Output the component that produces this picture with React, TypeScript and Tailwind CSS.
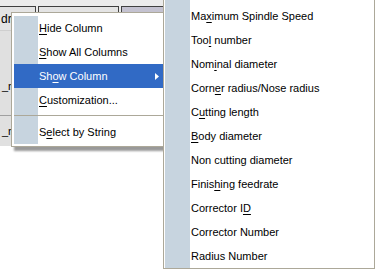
import { Fragment } from "react";

type Item = { label: string; key?: number; sub?: boolean; sep?: boolean };

const menuItems: Item[] = [
  { label: "Hide Column", key: 0 },
  { label: "Show All Columns", key: 0 },
  { label: "Show Column", key: 2, sub: true },
  { label: "Customization...", key: 0, sep: true },
  { label: "Select by String", key: 1 },
];

const columnItems: Item[] = [
  { label: "Maximum Spindle Speed", key: 2 },
  { label: "Tool number", key: 3 },
  { label: "Nominal diameter", key: 3 },
  { label: "Corner radius/Nose radius", key: 4 },
  { label: "Cutting length", key: 1 },
  { label: "Body diameter", key: 0 },
  { label: "Non cutting diameter" },
  { label: "Finishing feedrate", key: 5 },
  { label: "Corrector ID", key: 11 },
  { label: "Corrector Number" },
  { label: "Radius Number" },
];

// underline the access key letter
function Label({ text, k }: { text: string; k?: number }) {
  if (k === undefined) return <span>{text}</span>;
  return (
    <span>
      {text.slice(0, k)}
      <span className="underline underline-offset-2">{text[k]}</span>
      {text.slice(k + 1)}
    </span>
  );
}

export default function App() {
  return (
    <div
      className="relative w-[378px] h-[274px] overflow-hidden bg-white text-[11px] text-black"
      style={{ fontFamily: '"Liberation Sans", Arial, sans-serif' }}
    >
      {/* Grid behind the menus */}
      <div className="flex flex-col w-[165px] bg-[#ececec]">
        <div className="flex h-[30px] pt-[6px]">
          <div className="w-[36px] bg-[#e4e4e4] border-t border-r border-[#404040] pl-[1px] pt-[5px] text-[12px] leading-[14px]">
            dr
          </div>
          <div className="w-[2px]" />
          <div className="w-[81px] bg-[#e4e4e4] border-t border-l border-r border-[#404040]" />
          <div className="w-[2px]" />
          <div className="flex-1 bg-[#c4c2d0] border-t border-l border-[#404040]" />
        </div>
        <div className="flex flex-col bg-[#e0e0e0] w-[12px]">
          <div className="h-[46px] border-t border-[#cfcfcf]" />
          <div className="h-[23px] leading-[21px] pl-[2px]">_n</div>
          <div className="h-[17px] border-b border-[#a0a0a0]" />
          <div className="h-[30px] leading-[30px] pl-[2px]">_n</div>
        </div>
      </div>

      {/* Context menu */}
      <div className="absolute left-[11px] top-[12px] w-[158px] border border-[#aca899] bg-white pt-[3px] pb-[2px] pl-[2px] shadow-[3px_4px_2px_rgba(0,0,0,0.4)]">
        {menuItems.map((it) => (
          <Fragment key={it.label}>
            <div
              className={`flex items-center h-[24px] ${
                it.sub ? "bg-[#316ac5] text-white" : ""
              }`}
            >
              <div className={`w-[24px] h-full ${it.sub ? "" : "bg-[#c7d4df]"}`} />
              <div className="flex-1 pl-[1px]">
                <Label text={it.label} k={it.key} />
              </div>
              {it.sub && (
                <svg width="4" height="7" viewBox="0 0 4 7" className="mr-[9px]">
                  <path d="M0 0 L4 3.5 L0 7 Z" fill="white" />
                </svg>
              )}
            </div>
            {it.sep && (
              <div className="relative h-[8px]">
                <div className="absolute left-0 top-0 w-[24px] h-full bg-[#c7d4df]" />
                <div className="absolute left-0 right-0 top-[3px] h-px bg-[#aca899]" />
              </div>
            )}
          </Fragment>
        ))}
      </div>

      {/* Show Column submenu */}
      <div className="absolute left-[163px] top-[-1px] w-[212px] h-[270px] border border-[#aca899] bg-white pl-[1px] flex">
        <div className="w-[25px] bg-[#c7d4df]" />
        <div className="flex-1 flex flex-col pt-[4px] pl-[1px]">
          {columnItems.map((it) => (
            <div key={it.label} className="h-[24px] flex items-center">
              <Label text={it.label} k={it.key} />
            </div>
          ))}
        </div>
      </div>
    </div>
  );
}
